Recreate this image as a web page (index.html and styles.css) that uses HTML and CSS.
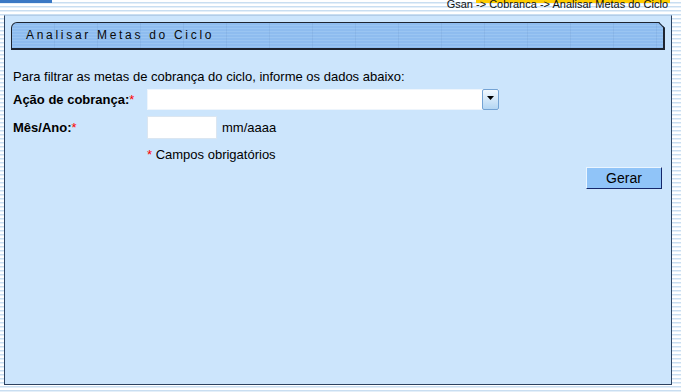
FILE: index.html
```html
<!DOCTYPE html>
<html lang="pt">
<head>
<meta charset="utf-8">
<title>Analisar Metas do Ciclo</title>
<link rel="stylesheet" href="styles.css">
</head>
<body>
<div class="top">
  <div class="topbar"></div>
  <div class="crumbs"><span>Gsan&nbsp;</span><span class="hl">-&gt; Cobranca -&gt; Analisar Metas do Ciclo</span></div>
</div>
<div class="panel">
  <div class="titlebar">Analisar Metas do Ciclo</div>
  <div class="content">
    <p class="intro">Para filtrar as metas de cobrança do ciclo, informe os dados abaixo:</p>
    <div class="form">
      <label class="lbl">Ação de cobrança:<span class="req">*</span></label>
      <div class="select"><span class="sel-val"></span><span class="arrow"><svg width="7" height="4" viewBox="0 0 7 4"><path d="M0 0H7L3.5 4Z" fill="#000"/></svg></span></div>
      <label class="lbl">Mês/Ano:<span class="req">*</span></label>
      <div class="field"><input class="input" type="text"><span class="hint">mm/aaaa</span></div>
      <div></div>
      <div class="note"><span class="req">*</span> Campos obrigatórios</div>
    </div>
    <div class="actions"><button class="btn" type="button">Gerar</button></div>
  </div>
</div>
</body>
</html>
```
FILE: styles.css
```css
* { box-sizing: border-box; }
html, body { margin: 0; padding: 0; }
body {
  font-family: "Liberation Sans", Arial, sans-serif;
  font-size: 13px;
  color: #000;
  background: repeating-linear-gradient(to bottom, #ffffff 0 2px, #c9def1 2px 3px, #e4eff9 3px 4px);
  height: 392px;
  overflow: hidden;
}
.top {
  display: flex;
  justify-content: space-between;
  align-items: flex-start;
  height: 15px;
}
.topbar {
  width: 52px;
  height: 3px;
  background: #3a78c4;
}
.crumbs {
  display: flex;
  font-size: 11px;
  line-height: 8px;
  height: 8px;
  padding-right: 11px;
  color: #111;
  white-space: nowrap;
}
.hl {
  padding-right: 2px;
  background: linear-gradient(to bottom, #ffcc00 0 3px, transparent 3px);
}
.panel {
  margin-left: 4px;
  width: 668px;
  height: 370px;
  border: 1px solid #2c4260;
  border-top-color: #b3cde8;
  background: #cce5fc;
  padding: 6px 6px 0 6px;
}
.titlebar {
  position: relative;
  height: 28px;
  border: 1px solid #1d2430;
  border-right-width: 2px;
  border-bottom-width: 2px;
  border-top-left-radius: 6px;
  clip-path: polygon(0 0, calc(100% - 6px) 0, 100% 6px, 100% 100%, 0 100%);
  background:
    repeating-linear-gradient(90deg, transparent 0 42px, rgba(40, 70, 120, 0.07) 42px 43px),
    repeating-linear-gradient(to bottom, #8ebcef 0 2px, #9ac5f2 2px 3px);
  padding-left: 14px;
  font-size: 12px;
  line-height: 25px;
  letter-spacing: 2.7px;
  color: #0a0a0a;
}
.titlebar::after {
  content: "";
  position: absolute;
  top: 1px;
  right: -4px;
  width: 10px;
  height: 1.6px;
  background: #1d2430;
  transform: rotate(45deg);
}
.content {
  padding: 0 3px 0 2px;
}
.intro {
  margin: 19px 0 0 0;
  line-height: 16px;
}
.form {
  display: grid;
  grid-template-columns: 134px 1fr;
  grid-template-rows: 21px 23px 16px;
  row-gap: 6px;
  margin-top: 4px;
  align-items: center;
}
.lbl {
  font-weight: bold;
}
.req {
  color: #ff0000;
  font-weight: normal;
}
.select {
  display: flex;
  width: 352px;
  height: 21px;
  background: #fff;
  border: 1px solid #eef5fc;
  border-right: none;
}
.sel-val { flex: 1; }
.arrow {
  width: 17px;
  height: 21px;
  margin-top: -1px;
  border: 1px solid #74a3d4;
  border-radius: 2px;
  background: linear-gradient(to bottom, #f2f9ff, #b4d6f3);
  display: flex;
  justify-content: center;
  padding-top: 6px;
}
.arrow svg { display: block; }
.field {
  display: flex;
  align-items: center;
  gap: 5px;
}
.input {
  width: 70px;
  height: 23px;
  border: 1px solid #dbe6f1;
  background: #fff;
  margin: 0;
  padding: 0 2px;
  font: inherit;
}
.note {
  line-height: 16px;
  margin-top: 4px;
}
.actions {
  display: flex;
  justify-content: flex-end;
  margin-top: 6px;
}
.btn {
  width: 76px;
  height: 22px;
  padding: 0;
  margin: 0;
  font-family: "Liberation Sans", Arial, sans-serif;
  font-size: 14px;
  color: #000;
  background: #90c4f8;
  border: 1px solid;
  border-color: #eaf5ff #15276a #15276a #eaf5ff;
  border-radius: 0;
}
```
